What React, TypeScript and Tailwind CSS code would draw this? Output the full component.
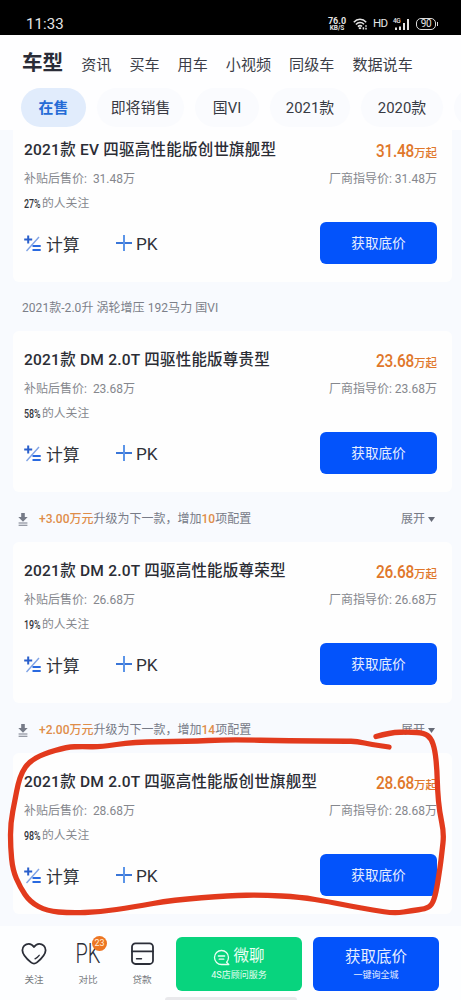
import React from 'react';
import clsx from 'clsx';

interface Car {
  name: string;
  price: string;
  attention: string;
}

const tabs = ['资讯', '买车', '用车', '小视频', '同级车', '数据说车'];

const chips = [
  { label: '在售', width: 'w-[65px]' },
  { label: '即将销售', width: 'w-[87px]' },
  { label: '国VI', width: 'w-[64px]' },
  { label: '2021款', width: 'w-[80px]' },
  { label: '2020款', width: 'w-[82px]' },
  { label: '', width: 'w-[60px]' },
];

// Centre line of the hand-drawn marker around the last card
const markerPoints = [
  [376, 736.5], [390, 732.5], [410, 732], [424, 733], [431, 738], [435, 750], [437, 770], [437.5, 790], [439.5, 812],
  [444, 833], [442, 852], [440, 868], [436, 893], [432, 905], [425, 909], [412, 910.5], [395, 913.5],
  [373, 910], [350, 906], [330, 902], [300, 897], [263, 895], [230, 895.5], [173, 900], [133, 907],
  [100, 912], [70, 913], [47, 911], [30, 902], [20, 887], [12.7, 870], [10.5, 847], [10.5, 823],
  [15, 800], [18, 784], [22, 772], [29, 762], [43, 754], [67, 747], [82, 746.5], [100, 747], [133, 742],
  [187, 741.5], [230, 739.5], [290, 741], [345, 741], [357, 741.5], [372, 744.5], [389, 747],
];

const smoothPath = (points: number[][]) => {
  let d = `M${points[0][0]} ${points[0][1]}`;
  for (let i = 1; i < points.length - 1; i++) {
    const [x, y] = points[i];
    const [nx, ny] = points[i + 1];
    d += ` Q${x} ${y} ${(x + nx) / 2} ${(y + ny) / 2}`;
  }
  const last = points[points.length - 1];
  return `${d} L${last[0]} ${last[1]}`;
};

const StatusBar: React.FC = () => (
  <div className="h-[35px] shrink-0 bg-black text-[#e4e4e4] flex items-center pl-[26px] pr-[25px] pt-[13px]">
    <span className="text-[15px] leading-none tracking-[0.1px] flex-1">11:33</span>
    <div className="w-[20px] text-center font-bold leading-none mr-[6px]">
      <div className="text-[9px] leading-[8px]">76.0</div>
      <div className="text-[6.5px] leading-[7px]">KB/S</div>
    </div>
    <svg className="w-[15px] h-[12px] mr-[5px]" viewBox="0 0 15 12" fill="none" stroke="currentColor" strokeWidth="1.5">
      <path d="M.8 4.2C4.2.4 9.8.4 13.2 4.2M2.9 6.4C5.2 4 8.8 4 11 6.2M4.9 8.6C6.2 7.4 7.8 7.4 9 8.4" />
      <path d="M5.8 10.2h2.4" strokeWidth="1.8" />
      <path d="M10.4 9.2v2.2M13 7.2v1.6M13 9.8v1.6" />
    </svg>
    <span className="text-[11.5px] leading-none w-[15px] mr-[5px] tracking-[-0.8px]">HD</span>
    <div className="relative w-[17px] h-[12px] mr-[6px]">
      <span className="absolute left-0 top-0 text-[6.5px] leading-[6px] font-medium tracking-[-0.4px]">4G</span>
      <svg className="w-[17px] h-[12px]" viewBox="0 0 17 12" fill="currentColor">
        <path d="M2 9.5h2V12H2zM6 8.500h2V12H6zM10 5h2v7h-2zM14 1h2v11h-2z" />
      </svg>
    </div>
    <div className="relative w-[20px] h-[12px] border-[1.5px] border-[#dcdcdc] rounded-[5px] flex items-center justify-center text-[10px] leading-none tracking-[-0.4px]">
      90
      <span className="absolute -right-[3px] top-[2.5px] w-[1.5px] h-[4px] bg-[#dcdcdc]" />
    </div>
  </div>
);

const CalcIcon: React.FC = () => (
  <svg className="w-[17px] h-[17px]" viewBox="0 0 17 17" fill="none">
    <path d="M15 2 2.500 16" stroke="#7fa3e6" strokeWidth="1.4" />
    <path d="M.2 4.5h8M4.200.5v8" stroke="#2a5fcb" strokeWidth="2" />
    <path d="M8.500 11h8.200M8.500 15h8.200" stroke="#2a6ae0" strokeWidth="2" />
  </svg>
);

const CarCard: React.FC<{ car: Car; first?: boolean }> = ({ car, first }) => (
  <section
    className={clsx(
      'ml-[13px] mr-[9px] pl-[11px] pr-[15px] pb-[18px] bg-[#fefefe] rounded-md',
      first ? 'pt-[9px] rounded-t-none' : 'pt-[18px]'
    )}
  >
    <div className="h-6 flex items-center justify-between whitespace-nowrap">
      <h3 className="text-[15.5px] font-medium text-[#2b2d35] tracking-[0.23px]">{car.name}</h3>
      <div className="flex items-baseline justify-end text-[#e0772a] font-medium">
        <span className="text-[17.5px] tracking-[-0.3px] w-[38px] origin-left scale-x-[0.88]">{car.price}</span>
        <span className="text-[11.5px]">万起</span>
      </div>
    </div>
    <div className="h-5 mt-[6px] flex items-center justify-between text-[12px] text-[#85878d] whitespace-nowrap">
      <span>补贴后售价:&nbsp; {car.price}万</span>
      <span>厂商指导价: {car.price}万</span>
    </div>
    <div className="h-5 mt-[5px] flex items-center text-[11.8px] text-[#85878d]">
      <span className="w-[18px] font-medium text-[12px] text-[#33353c]">
        <span className="inline-block origin-left scale-x-[0.74]">{car.attention}%</span>
      </span>
      <span>的人关注</span>
    </div>
    <div className="h-[42px] mt-[8px] flex items-center text-[#303239] whitespace-nowrap">
      <CalcIcon />
      <span className="text-[16.8px] leading-[24px] pt-[3px] ml-[5px] w-[70px]">计算</span>
      <svg className="w-[16px] h-[16px]" viewBox="0 0 16 16" fill="none">
        <path d="M0 8h16" stroke="#3a76d8" strokeWidth="2" />
        <path d="M8 0v16" stroke="#5c95e8" strokeWidth="2" />
      </svg>
      <span className="text-[17.2px] leading-[24px] pt-[2px] ml-[4px] tracking-[-0.2px]">PK</span>
      <button className="ml-auto w-[117px] h-[42px] rounded-[6px] bg-[#0353fb] text-[#e6eeff] text-[13.6px] pt-px">
        获取底价
      </button>
    </div>
  </section>
);

const UpgradeRow: React.FC<{ amount: string; count: number }> = ({ amount, count }) => (
  <div className="h-[50px] pt-[4px] pl-[18px] pr-[26px] flex items-center text-[12px] text-[#777b87] whitespace-nowrap">
    <svg className="w-[10px] h-[13px] mr-[11px]" viewBox="0 0 10 13" fill="#767b88">
      <path d="M3.2 0h3.6v4h2.900L5 8.800.3 4h2.900zM.6 9.400h8.800v1.100H.6zM.6 11.700h8.800v1.100H.6z" />
    </svg>
    <span className="font-medium text-[#df8d49]">+{amount}万元</span>
    <span>升级为下一款，增加</span>
    <span className="font-medium text-[#df8d49]">{count}</span>
    <span>项配置</span>
    <span className="ml-auto">展开</span>
    <svg className="w-[7px] h-[5px] ml-[3px]" viewBox="0 0 7 5" fill="#666a76">
      <path d="M0 0h7L3.5 5z" />
    </svg>
  </div>
);

const BottomBar: React.FC = () => (
  <footer className="h-[74px] shrink-0 bg-[#fdfeff] flex pt-[11px] pl-[10px] whitespace-nowrap">
    <div className="w-[48px] flex flex-col items-center">
      <svg className="w-[26px] h-[23px] mt-[5px]" viewBox="0 0 26 23" fill="none" stroke="#2b2e38" strokeWidth="1.8" strokeLinecap="round" strokeLinejoin="round">
        <path d="M13 5C11.500 2.800 9.800 1.800 7.800 1.800 4.300 1.800 1.400 4.400 1.400 8.200c0 4.800 4.300 8.600 8.600 12.200 2.100 1.700 3.900 1.700 6 0 4.300-3.600 8.600-7.400 8.600-12.200 0-3.800-2.900-6.400-6.400-6.400-2 0-3.700 1-5.200 3.200z" />
        <path d="M14 16.800c1.800-.9 3.100-2 4.200-3.500" strokeWidth="1.300" />
      </svg>
      <span className="text-[9.6px] leading-[14px] mt-[8px] text-[#777a80]">关注</span>
    </div>
    <div className="relative w-[60px] flex flex-col items-center">
      <span className="h-[28px] text-[27px] leading-[34px] text-[#2b2e38] origin-center scale-x-[0.74] font-light">PK</span>
      <span className="absolute left-[34px] -top-px w-[15px] h-[15px] rounded-full bg-[#ed7623] text-[#ffeedd] text-[9px] leading-[15px] text-center">
        23
      </span>
      <span className="text-[9.6px] leading-[14px] mt-[8px] text-[#777a80]">对比</span>
    </div>
    <div className="w-[48px] flex flex-col items-center">
      <svg className="w-[23px] h-[23px] mt-[5px]" viewBox="0 0 23 23" fill="none" stroke="#2b2e38" strokeWidth="1.8" strokeLinecap="round">
        <rect x="1" y="1.300" width="21" height="20.700" rx="3.500" />
        <path d="M1 9.300h21" />
        <path d="M5.500 16.700h5" strokeWidth="1.400" />
      </svg>
      <span className="text-[9.6px] leading-[14px] mt-[8px] text-[#777a80]">贷款</span>
    </div>
    <div className="ml-[10px] flex flex-col items-center">
      <button className="w-[126px] h-[54px] rounded-[6px] bg-[#08d47e] text-[#e9fff3] flex flex-col items-center">
        <span className="flex items-center h-[22px] mt-[9px] text-[15.5px]">
          <svg className="w-[17px] h-[17px] mr-[3px]" viewBox="0 0 17 17" fill="none" stroke="currentColor" strokeWidth="1.300" strokeLinecap="round">
            <path d="M15.800 15.500H8.500A7 7 0 1 1 15.500 8.500c0 1.900-.7 3.500-1.900 4.800z" strokeLinejoin="round" />
            <path d="M5.300 7h6.400M6.200 10.200h4.600" />
          </svg>
          微聊
        </span>
        <span className="text-[9px] leading-[13px] mt-px">4S店顾问服务</span>
      </button>
      <div className="w-[132px] h-[3px] mt-[6px] -ml-[16px] rounded-t-sm bg-[#e9e9ec]" />
    </div>
    <button className="ml-[11px] w-[126px] h-[54px] rounded-[6px] bg-[#0353fb] text-[#e6eeff] flex flex-col items-center">
      <span className="h-[22px] mt-[9px] text-[15.5px] leading-[23px]">获取底价</span>
      <span className="text-[9px] leading-[13px] mt-px">一键询全城</span>
    </button>
  </footer>
);

const App: React.FC = () => {
  return (
    <div className="relative w-[461px] h-[1000px] overflow-hidden bg-[#f8fafe] flex flex-col font-[Roboto,'Noto_Sans_CJK_SC',sans-serif]">
      <StatusBar />

      <header className="h-[95px] shrink-0 bg-[#fefeff] overflow-hidden">
        <nav className="h-[53px] flex items-center pl-[22px] pt-[7px] text-[15.1px] text-[#3b3d47] whitespace-nowrap">
          <h1 className="text-[20.6px] leading-none font-bold text-[#2a2c37] mr-[18px] pb-[4px]">车型</h1>
          <div className="flex gap-[18px]">
            {tabs.map((tab) => (
              <span key={tab}>{tab}</span>
            ))}
          </div>
        </nav>
        <div className="flex gap-[11px] pl-[21px] text-[14.9px] whitespace-nowrap">
          {chips.map((chip, i) => (
            <span
              key={i}
              className={clsx(
                'h-[39px] pt-px shrink-0 rounded-full flex items-center justify-center',
                chip.width,
                i === 0 ? 'bg-[#e1ecfc] text-[#256bd6] font-bold' : 'bg-[#fafbfe] text-[#383a43]'
              )}
            >
              {chip.label}
            </span>
          ))}
        </div>
      </header>

      <main className="flex-1 min-h-0">
        <CarCard first car={{ name: '2021款 EV 四驱高性能版创世旗舰型', price: '31.48', attention: '27' }} />
        <div className="h-[49px] pt-[2px] pl-[22px] flex items-center text-[12px] tracking-[0.05px] text-[#7c7f89]">
          2021款-2.0升 涡轮增压 192马力 国VI
        </div>
        <CarCard car={{ name: '2021款 DM 2.0T 四驱性能版尊贵型', price: '23.68', attention: '58' }} />
        <UpgradeRow amount="3.00" count={10} />
        <CarCard car={{ name: '2021款 DM 2.0T 四驱高性能版尊荣型', price: '26.68', attention: '19' }} />
        <UpgradeRow amount="2.00" count={14} />
        <CarCard car={{ name: '2021款 DM 2.0T 四驱高性能版创世旗舰型', price: '28.68', attention: '98' }} />
      </main>

      <BottomBar />

      <svg className="absolute inset-0 w-[461px] h-[1000px] pointer-events-none" viewBox="0 0 461 1000" fill="none">
        <path d={smoothPath(markerPoints)} stroke="#e23a1d" strokeWidth="5.3" strokeLinecap="round" strokeLinejoin="round" />
      </svg>
    </div>
  );
};

export default App;
